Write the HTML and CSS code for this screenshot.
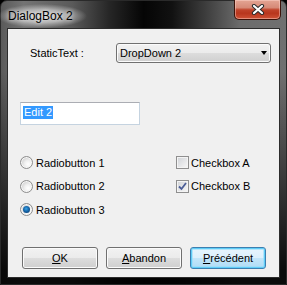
FILE: index.html
```html
<!DOCTYPE html>
<html>
<head>
<meta charset="utf-8">
<link rel="stylesheet" href="styles.css">
</head>
<body>
<div class="window">
  <div class="titlebar">
    <span class="title">DialogBox 2</span>
    <div class="close">
      <svg width="14" height="11" viewBox="0 0 14 11">
        <path d="M3 2 L11 9 M11 2 L3 9" stroke="#2b2b2b" stroke-width="4.2" stroke-linecap="round" fill="none"/>
        <path d="M3 2 L11 9 M11 2 L3 9" stroke="#ffffff" stroke-width="2.2" stroke-linecap="round" fill="none"/>
      </svg>
    </div>
  </div>
  <div class="client">
    <div class="row-static">
      <span class="label">StaticText :</span>
      <div class="combo"><span class="combo-text">DropDown 2</span><span class="arrow"></span></div>
    </div>
    <div class="edit"><span class="sel">Edit 2</span></div>
    <div class="options">
      <div class="col col-radios">
        <div class="opt"><span class="radio"></span><span>Radiobutton 1</span></div>
        <div class="opt"><span class="radio"></span><span>Radiobutton 2</span></div>
        <div class="opt"><span class="radio checked"><span class="dot"></span></span><span>Radiobutton 3</span></div>
      </div>
      <div class="col col-checks">
        <div class="opt"><span class="check"></span><span>Checkbox A</span></div>
        <div class="opt"><span class="check checked">
          <svg width="11" height="11" viewBox="0 0 11 11"><path d="M2 5.5 L4.5 8 L9 2" stroke="#4b5d97" stroke-width="1.8" fill="none"/></svg>
        </span><span>Checkbox B</span></div>
      </div>
    </div>
    <div class="buttons">
      <div class="btn"><span><u>O</u>K</span></div>
      <div class="btn"><span><u>A</u>bandon</span></div>
      <div class="btn default"><span><u>P</u>récédent</span></div>
    </div>
  </div>
</div>
</body>
</html>
```
FILE: styles.css
```css
html, body {
  margin: 0;
  padding: 0;
  background: #000;
}
body {
  font-family: "Liberation Sans", Arial, sans-serif;
  font-size: 11px;
  color: #000;
}
.window {
  width: 287px;
  height: 285px;
  box-sizing: border-box;
  display: flex;
  flex-direction: column;
  border: 1px solid #2a2a2a;
  border-radius: 7px 7px 0 0;
  background:
    linear-gradient(180deg, rgba(0,0,0,0) 0%, rgba(0,0,0,0) 25%, rgba(0,0,0,0.9) 95%),
    linear-gradient(90deg, #5a5a5a 0%, #747474 8%, #5a5a5a 25%, #262626 38%, #050505 50%, #111 60%, #3e3e3e 72%, #6c6c6c 84%, #707070 100%);
}
.titlebar {
  height: 27px;
  display: flex;
  align-items: flex-start;
  flex-shrink: 0;
}
.title {
  font-size: 12px;
  line-height: 14px;
  margin-top: 3px;
  margin-left: -4px;
  padding: 5px 14px 5px 11px;
  background: radial-gradient(closest-side, rgba(215,215,215,0.95) 0%, rgba(200,200,200,0.75) 55%, rgba(170,170,170,0) 100%);
  text-shadow: 0 0 4px rgba(255,255,255,0.8);
}
.close {
  margin-left: auto;
  margin-right: 5px;
  margin-top: -1px;
  width: 47px;
  height: 20px;
  box-sizing: border-box;
  border: 1px solid #3c1209;
  border-top: none;
  border-radius: 0 0 5px 5px;
  background: linear-gradient(180deg, #e4a594 0%, #d68a77 40%, #c0432a 52%, #b8361d 70%, #cf5236 100%);
  box-shadow: inset 0 0 0 1px rgba(255,220,210,0.45);
  display: flex;
  align-items: center;
  justify-content: center;
}
.close svg { display: block; }
.client {
  flex: 1;
  margin: 0 6px 6px 6px;
  border: 1px solid #2c2c2c;
  background: #f0f0f0;
  display: flex;
  flex-direction: column;
}
.row-static {
  display: flex;
  align-items: center;
  margin-top: 14px;
}
.label {
  width: 108px;
  padding-left: 22px;
  box-sizing: border-box;
}
.combo {
  width: 155px;
  height: 20px;
  box-sizing: border-box;
  border: 1px solid #707070;
  border-radius: 3px;
  background: linear-gradient(180deg, #f2f2f2 0%, #ebebeb 50%, #dddddd 50%, #cfcfcf 100%);
  box-shadow: inset 0 0 0 1px #fbfbfb;
  display: flex;
  align-items: center;
  padding-left: 3px;
}
.arrow {
  margin-left: auto;
  margin-right: 3px;
  width: 0;
  height: 0;
  border-left: 3.5px solid transparent;
  border-right: 3.5px solid transparent;
  border-top: 4px solid #000;
}
.edit {
  margin-top: 39px;
  margin-left: 12px;
  width: 120px;
  height: 23px;
  box-sizing: border-box;
  border: 1px solid #c5d3e0;
  border-top-color: #abadb3;
  background: #fff;
  padding: 3px 0 0 2px;
}
.sel {
  display: inline-block;
  background: #3399ff;
  color: #fff;
  line-height: 13px;
  padding: 0 1px;
}
.options {
  display: flex;
  margin-top: 26px;
}
.col {
  display: flex;
  flex-direction: column;
}
.col-radios {
  margin-left: 12px;
  width: 156px;
}
.opt {
  height: 23.5px;
  display: flex;
  align-items: center;
  gap: 3px;
}
.radio {
  width: 13px;
  height: 13px;
  box-sizing: border-box;
  border-radius: 50%;
  border: 1px solid #8d8d8d;
  background: radial-gradient(circle at 65% 65%, #ffffff 0%, #f0f0f0 35%, #cfcfcf 75%, #c4c4c4 100%);
  box-shadow: inset 0 0 0 1px #f7f7f7;
  display: flex;
  align-items: center;
  justify-content: center;
}
.dot {
  width: 7px;
  height: 7px;
  border-radius: 50%;
  background: radial-gradient(circle at 45% 40%, #3fa6e6 0%, #1b73b8 35%, #0c4680 75%, #08345f 100%);
}
.check {
  width: 13px;
  height: 13px;
  box-sizing: border-box;
  border: 1px solid #8f8f8f;
  background: linear-gradient(135deg, #cfd2d6 0%, #e6e7e9 55%, #f8f8f8 100%);
  box-shadow: inset 0 0 0 1px #f4f4f4;
  display: flex;
  align-items: center;
  justify-content: center;
}
.check svg { display: block; }
.col-checks .opt { gap: 2px; }
.buttons {
  margin-top: auto;
  margin-bottom: 8px;
  margin-left: 14px;
  display: flex;
  gap: 8px;
}
.btn {
  width: 76px;
  height: 22px;
  box-sizing: border-box;
  border: 1px solid #707070;
  border-radius: 3px;
  background: linear-gradient(180deg, #f2f2f2 0%, #ebebeb 50%, #dddddd 50%, #cfcfcf 100%);
  box-shadow: inset 0 0 0 1px #fbfbfb;
  display: flex;
  align-items: center;
  justify-content: center;
}
.btn.default {
  border-color: #3c7fb1;
  background: linear-gradient(180deg, #e8f5fd 0%, #dcf0fc 50%, #c3e6fa 50%, #b0dcf5 100%);
  box-shadow: inset 0 0 0 1px #5fcdf7, inset 0 0 0 2px rgba(150,220,250,0.6);
}
```
